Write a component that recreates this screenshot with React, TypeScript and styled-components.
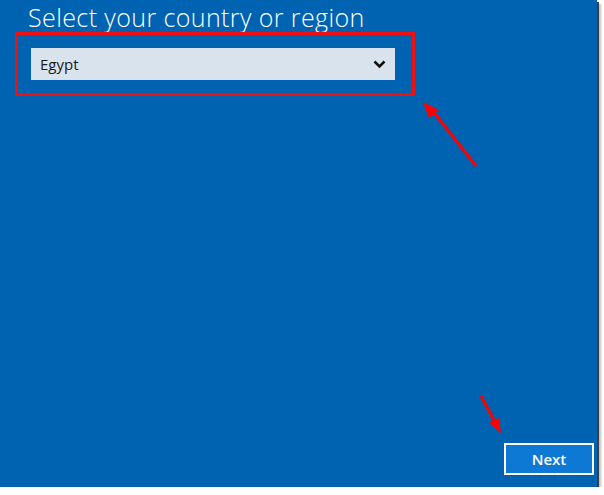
import { createGlobalStyle, styled } from 'styled-components'

const GlobalStyle = createGlobalStyle`
  html, body {
    margin: 0;
    padding: 0;
    background: #ffffff;
  }
  body {
    font-family: 'Open Sans', 'Noto Sans', 'Liberation Sans', sans-serif;
  }
`

const Screen = styled.div`
  position: relative;
  box-sizing: border-box;
  width: 597px;
  height: 487px;
  background: #0063b1;
  box-shadow: 2px 2px 0 #3a3f44, 4px 4px 2px rgba(0, 0, 0, 0.25);
  display: flex;
  flex-direction: column;
`

const Title = styled.h1`
  margin: 3px 0 0 28px;
  font-size: 25px;
  font-weight: 300;
  line-height: 29px;
  color: #ffffff;
  letter-spacing: 0.4px;
`

const Highlight = styled.div`
  box-sizing: border-box;
  margin-left: 15px;
  width: 400px;
  height: 64px;
  border: 3px solid #f01010;
  padding: 13px 0 0 13px;
`

const Select = styled.div`
  box-sizing: border-box;
  width: 364px;
  height: 32px;
  background: #d8e3ed;
  display: flex;
  align-items: center;
  justify-content: space-between;
  padding: 0 9px 0 9px;
`

const SelectValue = styled.span`
  font-size: 15px;
  color: #1a1a1a;
`

const Footer = styled.div`
  margin-top: auto;
  display: flex;
  justify-content: flex-end;
  padding: 0 3px 12px 0;
`

const NextButton = styled.button`
  box-sizing: border-box;
  width: 90px;
  height: 32px;
  border: 2px solid #ffffff;
  background: #0e78d5;
  color: #ffffff;
  font-family: 'Open Sans', 'Noto Sans', sans-serif;
  font-size: 15px;
  font-weight: 600;
  padding: 0;
`

const Annotations = styled.svg`
  position: absolute;
  left: 0;
  top: 0;
  pointer-events: none;
`

const Chevron = () => (
  <svg width="13" height="9" viewBox="0 0 13 9">
    <path d="M1.5 1.5 L6.5 6.5 L11.5 1.5" fill="none" stroke="#111" strokeWidth="2.6" />
  </svg>
)

export default function App() {
  return (
    <>
      <GlobalStyle />
      <Screen>
        <Title>Select your country or region</Title>
        <Highlight>
          <Select>
            <SelectValue>Egypt</SelectValue>
            <Chevron />
          </Select>
        </Highlight>
        <Footer>
          <NextButton>Next</NextButton>
        </Footer>
        <Annotations width="597" height="487">
          <line x1="476" y1="166" x2="432" y2="110" stroke="#f00" strokeWidth="3" />
          <polygon points="423,102 439,110 429,118" fill="#f00" />
          <line x1="481" y1="396" x2="496" y2="424" stroke="#f00" strokeWidth="3" />
          <polygon points="501,433 489,423 499,418" fill="#f00" />
        </Annotations>
      </Screen>
    </>
  )
}
